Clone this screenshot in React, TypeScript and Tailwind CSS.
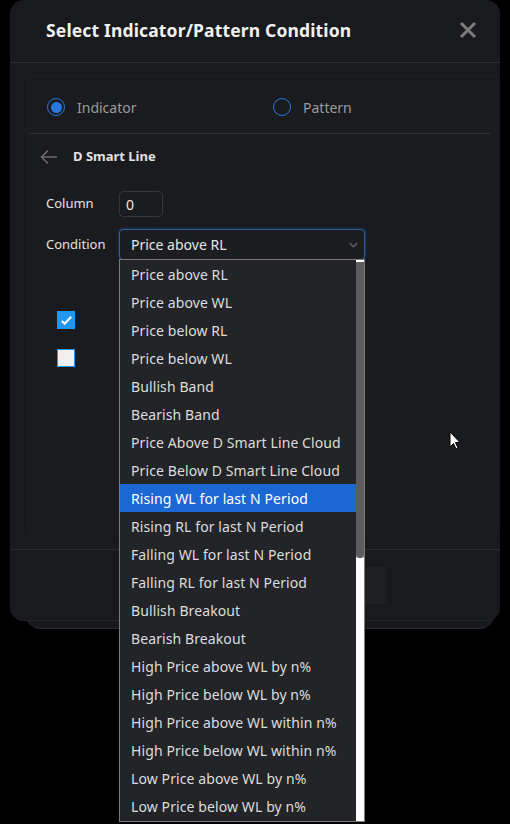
import React from "react";

const options = [
  "Price above RL",
  "Price above WL",
  "Price below RL",
  "Price below WL",
  "Bullish Band",
  "Bearish Band",
  "Price Above D Smart Line Cloud",
  "Price Below D Smart Line Cloud",
  "Rising WL for last N Period",
  "Rising RL for last N Period",
  "Falling WL for last N Period",
  "Falling RL for last N Period",
  "Bullish Breakout",
  "Bearish Breakout",
  "High Price above WL by n%",
  "High Price below WL by n%",
  "High Price above WL within n%",
  "High Price below WL within n%",
  "Low Price above WL by n%",
  "Low Price below WL by n%",
];

const font = { fontFamily: '"Noto Sans", "Open Sans", sans-serif' };

const Radio = ({ checked, label }: { checked?: boolean; label: string }) => (
  <label className="flex items-center gap-[12px]">
    <span className="w-[18px] h-[18px] rounded-full border-[1.5px] border-[#2a78de] flex items-center justify-center">
      {checked && <span className="w-[11px] h-[11px] rounded-full bg-[#2a78de]" />}
    </span>
    <span className="text-[14px] text-[#9b9b9b]">{label}</span>
  </label>
);

export default function App() {
  return (
    <div className="relative w-[510px] h-[824px] bg-black overflow-hidden" style={font}>
      <div className="relative ml-[10px] w-[490px]">
        {/* stacked card behind */}
        <div className="absolute left-[15px] right-[5px] bottom-[-8px] h-[40px] rounded-b-2xl bg-[#18191c] border-b border-[#2a2b2f]" />
        <div className="relative rounded-[14px] bg-[#191a1e] border-b border-[#232428]">
          {/* header */}
          <div className="h-[63px] flex items-center justify-between pl-[36px] pr-[22px] pb-[2px] border-b border-[#2c2d31]">
            <h2 className="text-[17.5px] font-bold text-[#f0f0f0] tracking-[0.15px]">
              Select Indicator/Pattern Condition
            </h2>
            <svg viewBox="0 0 20 20" className="w-[20px] h-[20px] text-[#7c7c7c]" fill="none" stroke="currentColor" strokeWidth="3">
              <path d="M3 3l14 14M17 3L3 17" />
            </svg>
          </div>

          {/* body */}
          <div className="pl-[18px] pr-[2px] pt-[12px] pb-[14px]">
            <div className="h-[460px] border border-[#1e1f23] rounded-sm bg-[#1a1b1f]">
              <div className="h-[58px] flex items-center pl-[17px] pt-[5px] ml-[1px] mr-[7px] border-b border-[#2e2f33]">
                <div className="w-[226px]">
                  <Radio checked label="Indicator" />
                </div>
                <Radio label="Pattern" />
              </div>

              <div className="flex items-center gap-[14px] pl-[10px] pt-[9px] h-[36px]">
                <svg viewBox="0 0 20 20" className="w-[20px] h-[20px] text-[#6e6e6e]" fill="none" stroke="currentColor" strokeWidth="1.6">
                  <path d="M18 10H3M9 3.5L2.5 10 9 16.5" />
                </svg>
                <span className="text-[13px] font-bold text-[#e2e2e2]">D Smart Line</span>
              </div>

              <div className="pl-[17px] pt-[21px] flex flex-col gap-[12px]">
                <div className="flex items-center">
                  <span className="w-[73px] text-[13px] text-[#e2e2e2]">Column</span>
                  <div className="w-[44px] h-[26px] rounded-[4px] border border-[#34353a] bg-[#1a1b1f] flex items-center px-[6px] text-[14px] text-[#e8e8e8]">
                    0
                  </div>
                </div>
                <div className="flex items-center">
                  <span className="w-[73px] text-[13px] text-[#e2e2e2]">Condition</span>
                  <div className="relative">
                    <div className="w-[246px] h-[31px] rounded-[4px] border border-[#2f5d9e] shadow-[0_0_3px_#1f4f94] bg-[#1c1d21] flex items-center justify-between pl-[11px] pr-[6px]">
                      <span className="text-[14px] text-[#e6e6e6]">Price above RL</span>
                      <svg viewBox="0 0 10 6" className="w-[9px] h-[6px] text-[#777]" fill="none" stroke="currentColor" strokeWidth="1.2">
                        <path d="M1 1l4 4 4-4" />
                      </svg>
                    </div>

                    {/* dropdown list overlay */}
                    <div className="absolute z-10 left-0 top-[30px] w-[246px] h-[563px] bg-[#232428] border border-[#7a7a7a] flex">
                      <ul className="flex-1">
                        {options.map((o, i) => (
                          <li
                            key={o}
                            className={`h-[28px] flex items-center pl-[11px] text-[14px] tracking-[0.1px] whitespace-nowrap ${
                              i === 8 ? "bg-[#1b67d3] text-white" : "text-[#dcdcdc]"
                            }`}
                          >
                            {o}
                          </li>
                        ))}
                      </ul>
                      <div className="w-[8px] bg-white flex flex-col">
                        <div className="h-[296px] mt-[2px] bg-[#5c5c5c] rounded-b-[3px]" />
                      </div>
                    </div>
                  </div>
                </div>
              </div>

              <div className="pl-[28px] pt-[51px] flex flex-col gap-[20px]">
                <span className="w-[18px] h-[18px] bg-[#2196f3] flex items-center justify-center">
                  <svg viewBox="0 0 14 14" className="w-[13px] h-[13px]" fill="none" stroke="white" strokeWidth="2.2">
                    <path d="M2 7.5l3 3 7-7.5" />
                  </svg>
                </span>
                <span className="w-[18px] h-[18px] bg-[#efefef] border border-[#2196f3]" />
              </div>
            </div>
          </div>

          {/* footer */}
          <div className="h-[71px] border-t border-[#2a2b2f] flex items-center justify-end pr-[114px]">
            <div className="w-[100px] h-[37px] rounded-[4px] bg-[#1f2023]" />
          </div>
        </div>
      </div>

      {/* mouse cursor */}
      <svg viewBox="0 0 12 19" className="absolute left-[449px] top-[431px] w-[12px] h-[19px]">
        <path d="M1 1v15l3.5-3.5 2.5 5.5 2-1-2.5-5.5H11z" fill="white" stroke="black" strokeWidth="1" />
      </svg>
    </div>
  );
}
